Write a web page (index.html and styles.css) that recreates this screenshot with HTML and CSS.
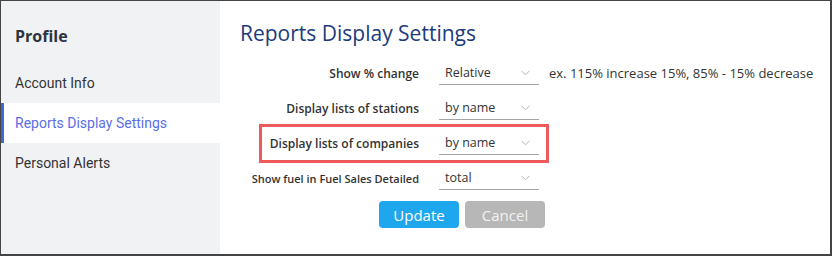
FILE: index.html
```html
<!DOCTYPE html>
<html lang="en">
<head>
  <meta charset="UTF-8" />
  <title>Reports Display Settings</title>
  <link rel="stylesheet" href="styles.css">
</head>
<body>
  <div class="frame">
    <aside class="sidebar">
      <h2>Profile</h2>
      <a class="nav-item" href="#">Account Info</a>
      <a class="nav-item active" href="#">Reports Display Settings</a>
      <a class="nav-item" href="#">Personal Alerts</a>
    </aside>

    <main class="content">
      <h1>Reports Display Settings</h1>

      <div class="form-row">
        <label>Show % change</label>
        <div class="select"><span>Relative</span><svg class="chev" width="9" height="6" viewBox="0 0 9 6"><path d="M0.5 0.8 L4.5 4.8 L8.5 0.8" fill="none" stroke="#b5b5b5" stroke-width="1"/></svg></div>
        <span class="hint">ex. 115% increase 15%, 85% - 15% decrease</span>
      </div>

      <div class="form-row">
        <label>Display lists of stations</label>
        <div class="select"><span>by name</span><svg class="chev" width="9" height="6" viewBox="0 0 9 6"><path d="M0.5 0.8 L4.5 4.8 L8.5 0.8" fill="none" stroke="#b5b5b5" stroke-width="1"/></svg></div>
      </div>

      <div class="form-row marked">
        <label>Display lists of companies</label>
        <div class="select"><span>by name</span><svg class="chev" width="9" height="6" viewBox="0 0 9 6"><path d="M0.5 0.8 L4.5 4.8 L8.5 0.8" fill="none" stroke="#b5b5b5" stroke-width="1"/></svg></div>
      </div>

      <div class="form-row">
        <label class="small">Show fuel in Fuel Sales Detailed</label>
        <div class="select"><span>total</span><svg class="chev" width="9" height="6" viewBox="0 0 9 6"><path d="M0.5 0.8 L4.5 4.8 L8.5 0.8" fill="none" stroke="#b5b5b5" stroke-width="1"/></svg></div>
      </div>

      <div class="actions">
        <button class="btn btn-update">Update</button>
        <button class="btn btn-cancel">Cancel</button>
      </div>
    </main>
  </div>
</body>
</html>
```

FILE: styles.css
```css
*, *::after { margin: 0; padding: 0; box-sizing: border-box; }
body { background: #fff; font-family: 'Open Sans', sans-serif; color: #333; }

.frame {
  width: 832px;
  height: 256px;
  display: flex;
  border: 1px solid #444;
  border-right-width: 2px;
  border-bottom-width: 2px;
}

.sidebar {
  width: 219px;
  background-color: #f1f2f4;
  padding-top: 23px;
}

.sidebar h2 {
  font-size: 16px;
  font-weight: 700;
  line-height: 24px;
  color: #2b3441;
  padding-left: 14px;
  margin-bottom: 15px;
}

.nav-item {
  display: block;
  height: 40px;
  line-height: 40px;
  padding-left: 14px;
  font-family: Roboto, sans-serif;
  font-size: 14px;
  color: #333;
  text-decoration: none;
}

.nav-item.active {
  background-color: #fff;
  color: #5b6ee4;
  border-left: 3px solid #3f67d6;
  padding-left: 11px;
}

.content {
  flex: 1;
  padding: 18px 0 0 20px;
}

.content h1 {
  font-size: 21px;
  font-weight: 400;
  line-height: 28px;
  color: #1d3a7c;
  margin-bottom: 14px;
}

.form-row {
  display: flex;
  align-items: center;
  height: 24px;
  margin-bottom: 11px;
  position: relative;
}

.form-row label {
  width: 179px;
  margin-right: 20px;
  text-align: right;
  font-size: 12px;
  font-weight: 600;
  color: #333;
}

.form-row label.small {
  font-size: 11px;
}

.select {
  width: 100px;
  height: 24px;
  display: flex;
  align-items: center;
  justify-content: space-between;
  padding: 0 9px 0 6px;
  border-bottom: 1px solid #a6a6a6;
  font-size: 12.5px;
  color: #333;
}

.hint {
  margin-left: 10px;
  font-size: 13px;
  color: #333;
}

.marked::after {
  content: "";
  position: absolute;
  left: 19px;
  top: -7px;
  width: 290px;
  height: 39px;
  border: 3px solid #ee5a5c;
}

.actions {
  display: flex;
  gap: 6px;
  padding-left: 139px;
  margin-top: 5px;
}

.btn {
  width: 80px;
  height: 27px;
  border: none;
  border-radius: 4px;
  font-family: 'Open Sans', sans-serif;
  font-size: 15px;
  color: #fff;
}

.btn-update { background-color: #1ea7ec; }
.btn-cancel { background-color: #b7b7b7; color: #f2f2f2; }
```
